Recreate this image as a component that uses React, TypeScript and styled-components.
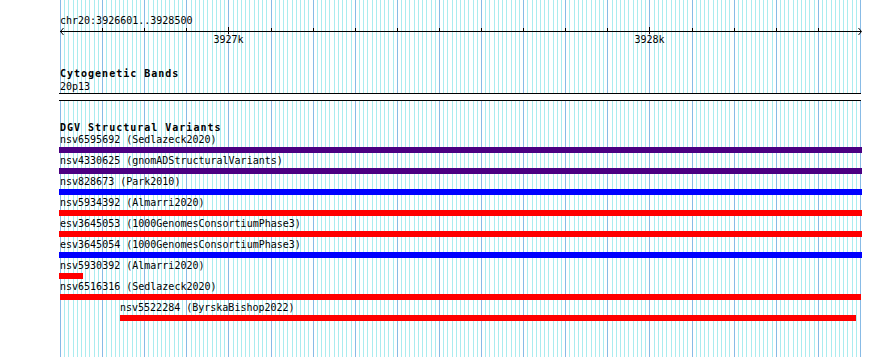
import React from "react";
import styled, { createGlobalStyle } from "styled-components";

const GlobalStyle = createGlobalStyle`
  html, body { margin: 0; padding: 0; background: #ffffff; }
  body { font-family: "DejaVu Sans Mono", "Liberation Mono", monospace; }
`;

const WIN_START = 3926600;
const WIN_END = 3928500;
const TRACK_X = 60;
const TRACK_W = 800;
const bpToX = (bp: number) => TRACK_X + Math.round(((bp - WIN_START) * TRACK_W) / (WIN_END - WIN_START));

const Canvas = styled.div`
  position: relative;
  width: 890px;
  height: 357px;
  overflow: hidden;
  background: #ffffff;
`;

const GuideLayer = styled.svg`
  position: absolute;
  left: 0;
  top: 0;
  z-index: 0;
`;

const Tracks = styled.div`
  position: relative;
  z-index: 1;
  display: flex;
  flex-direction: column;
  padding-left: ${TRACK_X}px;
  color: #000000;
  font-family: "DejaVu Sans Mono", "Liberation Mono", monospace;
  font-size: 10px;
`;

const PositionLabel = styled.div`
  margin-top: 15px;
  height: 11px;
  line-height: 11px;
  white-space: nowrap;
`;

const RulerSvg = styled.svg`
  display: block;
  margin-left: -1px;
`;

const TrackTitle = styled.div<{ $top: number; $h: number }>`
  margin-top: ${(p) => p.$top}px;
  height: ${(p) => p.$h}px;
  line-height: 11px;
  font-weight: bold;
  letter-spacing: 1px;
  white-space: nowrap;
`;

const BandLabel = styled.div`
  margin-top: 2px;
  height: 11px;
  line-height: 11px;
`;

const BandBox = styled.div`
  margin-top: 1px;
  margin-left: -1px;
  width: 802px;
  height: 8px;
  box-sizing: border-box;
  border-top: 1px solid #000000;
  border-bottom: 1px solid #000000;
  background: #ffffff;
`;

const FeatureRow = styled.div<{ $offset: number }>`
  display: flex;
  flex-direction: column;
  height: 21px;
  margin-left: ${(p) => p.$offset}px;
`;

const FeatureLabel = styled.div`
  height: 11px;
  line-height: 11px;
  white-space: nowrap;
`;

const FeatureBar = styled.div<{ $color: string; $width: number; $shift: number }>`
  margin-top: 2px;
  margin-left: ${(p) => p.$shift}px;
  height: 6px;
  width: ${(p) => p.$width}px;
  background: ${(p) => p.$color};
`;

const PURPLE = "#4b0082";
const BLUE = "#0000ff";
const RED = "#ff0000";

type Feature = { name: string; color: string; x1: number; x2: number; labelX: number };

const features: Feature[] = [
  { name: "nsv6595692 (Sedlazeck2020)", color: PURPLE, x1: 59, x2: 862, labelX: 60 },
  { name: "nsv4330625 (gnomADStructuralVariants)", color: PURPLE, x1: 59, x2: 862, labelX: 60 },
  { name: "nsv828673 (Park2010)", color: BLUE, x1: 59, x2: 862, labelX: 60 },
  { name: "nsv5934392 (Almarri2020)", color: RED, x1: 59, x2: 862, labelX: 60 },
  { name: "esv3645053 (1000GenomesConsortiumPhase3)", color: RED, x1: 59, x2: 862, labelX: 60 },
  { name: "esv3645054 (1000GenomesConsortiumPhase3)", color: BLUE, x1: 59, x2: 862, labelX: 60 },
  { name: "nsv5930392 (Almarri2020)", color: RED, x1: 59, x2: 83, labelX: 60 },
  { name: "nsv6516316 (Sedlazeck2020)", color: RED, x1: 60, x2: 861, labelX: 60 },
  { name: "nsv5522284 (ByrskaBishop2022)", color: RED, x1: 120, x2: 856, labelX: 120 },
];

const MINOR = "#aaecef";
const MAJOR = "#88bbe6";

function GuideLines() {
  const lines = [];
  for (let k = 0; k <= 190; k++) {
    const x = bpToX(WIN_START + k * 10);
    lines.push(
      <rect key={k} x={x} y={0} width={1} height={357} fill={k % 10 === 0 ? MAJOR : MINOR} />
    );
  }
  return (
    <GuideLayer width={890} height={357} shapeRendering="crispEdges">
      {lines}
    </GuideLayer>
  );
}

function Ruler() {
  const ox = 59;
  const ticks = [];
  for (let k = 1; k <= 18; k++) {
    const bp = WIN_START + k * 100;
    const x = bpToX(bp) - ox;
    const big = bp % 1000 === 0;
    ticks.push(
      <rect key={k} x={x} y={big ? 1 : 2} width={1} height={big ? 7 : 3} fill="#000" />
    );
    if (big) {
      ticks.push(
        <text
          key={"l" + k}
          x={x + 0.5}
          y={17}
          textAnchor="middle"
          fontFamily='"DejaVu Sans Mono", "Liberation Mono", monospace'
          fontSize={10}
          fill="#000"
        >
          {`${bp / 1000}k`}
        </text>
      );
    }
  }
  return (
    <RulerSvg width={803} height={20} shapeRendering="crispEdges">
      <rect x={1} y={5} width={801} height={1} fill="#000" />
      {ticks}
      <polyline points="4.5,2 1.5,5.5 4.5,9" fill="none" stroke="#000" strokeWidth={1} shapeRendering="auto" />
      <polyline points="799.5,2 802.5,5.5 799.5,9" fill="none" stroke="#000" strokeWidth={1} shapeRendering="auto" />
    </RulerSvg>
  );
}

export default function App() {
  return (
    <>
      <GlobalStyle />
      <Canvas>
        <GuideLines />
        <Tracks>
          <PositionLabel>chr20:3926601..3928500</PositionLabel>
          <Ruler />
          <TrackTitle $top={22} $h={11}>Cytogenetic Bands</TrackTitle>
          <BandLabel>20p13</BandLabel>
          <BandBox />
          <TrackTitle $top={21} $h={12}>DGV Structural Variants</TrackTitle>
          {features.map((f) => (
            <FeatureRow key={f.name} $offset={f.labelX - TRACK_X}>
              <FeatureLabel>{f.name}</FeatureLabel>
              <FeatureBar $color={f.color} $shift={f.x1 - f.labelX} $width={f.x2 - f.x1} />
            </FeatureRow>
          ))}
        </Tracks>
      </Canvas>
    </>
  );
}
